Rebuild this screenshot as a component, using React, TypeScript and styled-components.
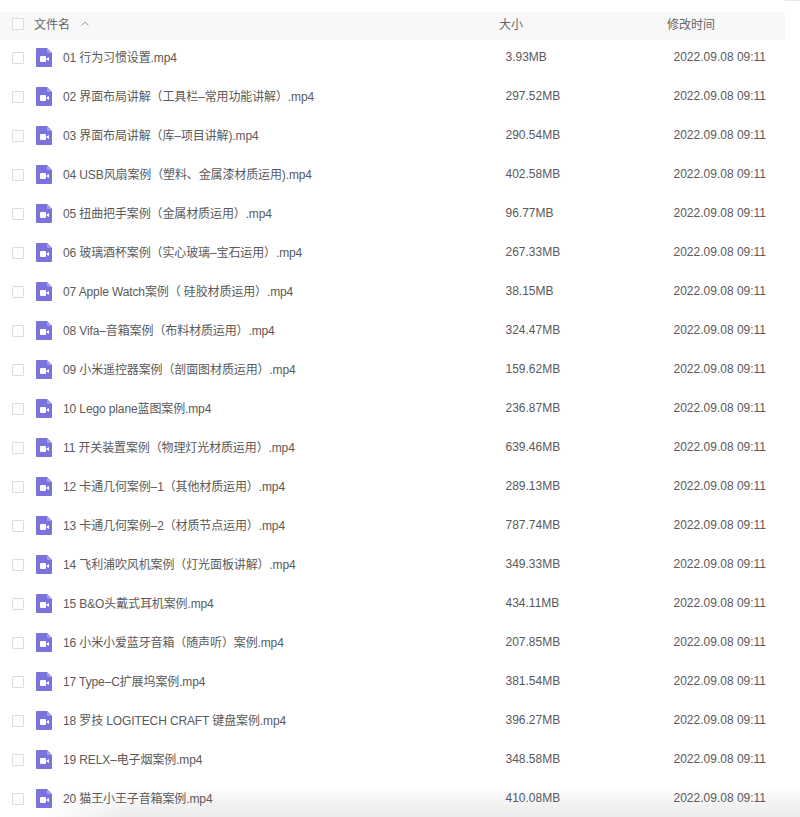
import React from "react";
import styled, { createGlobalStyle, css } from "styled-components";

interface FileItem {
  name: string;
  size: string;
}

const files: FileItem[] = [
  { name: "01 行为习惯设置.mp4", size: "3.93MB" },
  { name: "02 界面布局讲解（工具栏–常用功能讲解）.mp4", size: "297.52MB" },
  { name: "03 界面布局讲解（库–项目讲解).mp4", size: "290.54MB" },
  { name: "04 USB风扇案例（塑料、金属漆材质运用).mp4", size: "402.58MB" },
  { name: "05 扭曲把手案例（金属材质运用）.mp4", size: "96.77MB" },
  { name: "06 玻璃酒杯案例（实心玻璃–宝石运用）.mp4", size: "267.33MB" },
  { name: "07 Apple Watch案例（ 硅胶材质运用）.mp4", size: "38.15MB" },
  { name: "08 Vifa–音箱案例（布料材质运用）.mp4", size: "324.47MB" },
  { name: "09 小米遥控器案例（剖面图材质运用）.mp4", size: "159.62MB" },
  { name: "10 Lego plane蓝图案例.mp4", size: "236.87MB" },
  { name: "11 开关装置案例（物理灯光材质运用）.mp4", size: "639.46MB" },
  { name: "12 卡通几何案例–1（其他材质运用）.mp4", size: "289.13MB" },
  { name: "13 卡通几何案例–2（材质节点运用）.mp4", size: "787.74MB" },
  { name: "14 飞利浦吹风机案例（灯光面板讲解）.mp4", size: "349.33MB" },
  { name: "15 B&O头戴式耳机案例.mp4", size: "434.11MB" },
  { name: "16 小米小爱蓝牙音箱（随声听）案例.mp4", size: "207.85MB" },
  { name: "17 Type–C扩展坞案例.mp4", size: "381.54MB" },
  { name: "18 罗技 LOGITECH CRAFT 键盘案例.mp4", size: "396.27MB" },
  { name: "19 RELX–电子烟案例.mp4", size: "348.58MB" },
  { name: "20 猫王小王子音箱案例.mp4", size: "410.08MB" },
];

const VideoIcon = () => (
  <svg width="16" height="19" viewBox="0 0 16 19">
    <path d="M1 0H11l5 5v13a1 1 0 0 1-1 1H1a1 1 0 0 1-1-1V1a1 1 0 0 1 1-1z" fill="#7b73dc" />
    <path d="M11 0l5 5h-4a1 1 0 0 1-1-1z" fill="#a29cea" />
    <rect x="4" y="8" width="6" height="6" rx="1" fill="#fff" />
    <path d="M10.500 10.500l2.500-1.600v4.200L10.500 11.500z" fill="#fff" />
  </svg>
);

const App = () => {
  return (
    <>
      <GlobalStyle />
      <Page>
        <TopEdge />
        <HeaderRow>
          <CheckBox />
          <NameHead>
            文件名
            <SortIcon width="8" height="5" viewBox="0 0 8 5">
              <path d="M0.500 4.500L4 1l3.500 3.500" fill="none" stroke="#999" strokeWidth="1" />
            </SortIcon>
          </NameHead>
          <SizeHead>大小</SizeHead>
          <TimeHead>修改时间</TimeHead>
        </HeaderRow>
        <List>
          {files.map((f) => (
            <Row key={f.name}>
              <CheckBox />
              <IconCell>
                <VideoIcon />
              </IconCell>
              <Name>{f.name}</Name>
              <Size>{f.size}</Size>
              <Time>2022.09.08 09:11</Time>
            </Row>
          ))}
        </List>
        <BottomFade />
      </Page>
    </>
  );
};

const GlobalStyle = createGlobalStyle`
  html, body {
    margin: 0;
    padding: 0;
    background: #fff;
  }
  body {
    font-family: "Liberation Sans", "Noto Sans CJK SC", sans-serif;
    color: #5a5a5a;
  }
`;
const cellText = css`
  padding-bottom: 2px;
  white-space: nowrap;
`;
const headText = css`
  padding-bottom: 2px;
`;
const Page = styled.div`
  position: relative;
  width: 800px;
  height: 817px;
  overflow: hidden;
  padding-top: 12px;
  box-sizing: border-box;
`;
const TopEdge = styled.div`
  position: absolute;
  top: 0;
  right: 0;
  width: 15px;
  height: 1px;
  background-color: #e8e8e8;
`;
const HeaderRow = styled.div`
  display: flex;
  align-items: center;
  width: 785px;
  height: 28px;
  padding: 0 0 4px 12px;
  box-sizing: border-box;
  background-color: #f8f8f8;
  font-size: 12px;
  color: #666;
`;
const CheckBox = styled.span`
  display: block;
  flex: none;
  width: 10px;
  height: 10px;
  border: 1px solid #ddd;
  border-radius: 1px;
  background-color: #fff;
`;
const NameHead = styled.div`
  ${headText}
  display: flex;
  align-items: center;
  width: 465px;
  margin-left: 10px;
`;
const SortIcon = styled.svg`
  margin-left: 11px;
`;
const SizeHead = styled.div`
  ${headText}
  width: 168px;
`;
const TimeHead = styled.div`
  ${headText}
`;
const List = styled.div`
  position: relative;
  z-index: 1;
  margin-top: -2px;
`;
const Row = styled.div`
  display: flex;
  align-items: center;
  height: 39px;
  padding-left: 12px;
  font-size: 12px;
  color: #5a5a5a;
`;
const IconCell = styled.div`
  display: flex;
  width: 27px;
  margin-left: 12px;
`;
const Name = styled.div`
  ${cellText}
  width: 442.500px;
  letter-spacing: -0.12px;
`;
const Size = styled.div`
  ${cellText}
  width: 168px;
`;
const Time = styled.div`
  ${cellText}
`;
const BottomFade = styled.div`
  position: absolute;
  left: 0;
  right: 0;
  bottom: 0;
  height: 32px;
  background: linear-gradient(to bottom, rgba(232, 232, 232, 0), rgba(232, 232, 232, 0.9));
  mask-image: linear-gradient(to right, transparent 40px, #000 130px);
`;

export default App;
